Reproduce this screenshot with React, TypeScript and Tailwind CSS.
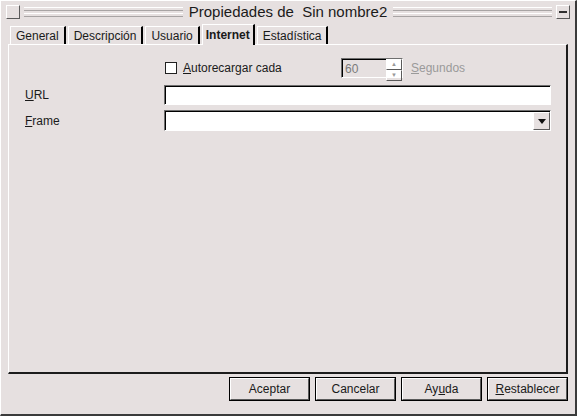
const bevelOut = "border border-t-white border-l-white border-r-[#5a5a5a] border-b-[#5a5a5a]";
const sunken = "border border-t-[#6f6f6f] border-l-[#6f6f6f] border-r-white border-b-white";

function Tab({ label, active, first }: { label: string; active?: boolean; first?: boolean }) {
  if (active) {
    return (
      <div className="relative z-10 -mb-px ml-[2px] flex h-[21px] items-center border-t border-l border-t-white border-l-white border-r-2 border-r-black bg-[#e6e0e0] px-[3px] text-[12px] font-bold">
        {label}
      </div>
    );
  }
  return (
    <div
      className={`mt-[2px] flex h-[18px] items-center border-t border-l border-t-white border-l-white border-r-2 border-r-black px-[5px] text-[12px] ${first ? "" : "ml-[2px]"}`}
    >
      {label}
    </div>
  );
}

function Button({ children }: { children: React.ReactNode }) {
  return (
    <div className="flex h-[24px] w-[81px] items-center justify-center border border-black">
      <div className={`flex h-full w-full items-center justify-center ${bevelOut} text-[12px]`}>{children}</div>
    </div>
  );
}

export default function App() {
  return (
    <div
      className="flex h-[416px] w-[577px] flex-col bg-[#e6e0e0] text-[#1a1a1a] border-r-2 border-b-2 border-r-[#3a3a3a] border-b-[#3a3a3a] border-t border-l border-t-white border-l-white"
      style={{ fontFamily: '"Liberation Sans", Arial, sans-serif' }}
    >
      {/* Title bar */}
      <div className="flex h-[20px] items-center gap-[4px] px-[5px] pt-[1px]">
        <div className={`h-[14px] w-[14px] ${bevelOut} bg-[#e6e0e0]`} />
        <div className="flex h-[10px] flex-1 flex-col justify-between">
          <div className="h-px bg-white" />
          <div className="h-px bg-[#a8a4a4]" />
          <div className="h-px bg-white" />
          <div className="h-px bg-[#a8a4a4]" />
        </div>
        <div className="px-[2px] text-[15px] leading-none">Propiedades de&nbsp; Sin nombre2</div>
        <div className="flex h-[10px] flex-1 flex-col justify-between">
          <div className="h-px bg-white" />
          <div className="h-px bg-[#a8a4a4]" />
          <div className="h-px bg-white" />
          <div className="h-px bg-[#a8a4a4]" />
        </div>
        <div className={`flex h-[14px] w-[14px] items-center justify-center ${bevelOut} bg-[#e6e0e0]`}>
          <div className="h-[2px] w-[8px] bg-[#303030]" />
        </div>
      </div>

      {/* Tabs */}
      <div className="flex items-end pl-[9px] pt-[3px]">
        <Tab label="General" first />
        <Tab label="Descripción" />
        <Tab label="Usuario" />
        <Tab label="Internet" active />
        <Tab label="Estadística" />
      </div>

      {/* Panel */}
      <div className="mx-[7px] flex h-[330px] flex-col border-t border-l border-t-white border-l-white border-r-2 border-b-2 border-r-[#1c1c1c] border-b-[#1c1c1c] text-[12px]">
        <div className="mt-[13px] flex items-center">
          <div className="ml-[156px] flex w-[176px] items-center gap-[6px]">
            <div className="h-[12px] w-[12px] border border-[#202020] bg-white" />
            <span>
              <u>A</u>utorecargar cada
            </span>
          </div>
          <div className={`flex h-[20px] w-[62px] items-center ${sunken} bg-white`}>
            <div className="flex h-full flex-1 items-center border-t border-l border-black bg-[#e6e0e0] pl-[2px] text-[#7a7a7a]">60</div>
            <div className="flex h-full w-[16px] flex-col">
              <div className={`flex flex-1 items-center justify-center ${bevelOut} text-[6px] text-[#999]`}>▲</div>
              <div className={`flex flex-1 items-center justify-center ${bevelOut} text-[6px] text-[#999]`}>▼</div>
            </div>
          </div>
          <span className="ml-[8px] text-[#9a9a9a]">
            <u>S</u>egundos
          </span>
        </div>

        <div className="mt-[7px] flex items-center">
          <span className="ml-[16px] w-[139px]">
            <u>U</u>RL
          </span>
          <div className={`h-[20px] w-[387px] ${sunken}`}>
            <div className="h-full w-full border-t border-l border-black bg-white" />
          </div>
        </div>

        <div className="mt-[5px] flex items-center">
          <span className="ml-[16px] w-[139px]">
            <u>F</u>rame
          </span>
          <div className={`flex h-[21px] w-[387px] ${sunken}`}>
            <div className="flex h-full w-full border-t border-l border-black bg-white">
              <div className="flex-1" />
              <div className={`flex h-full w-[17px] items-center justify-center ${bevelOut} bg-[#e6e0e0]`}>
                <svg width="8" height="5" viewBox="0 0 8 5">
                  <path d="M0 0 H8 L4 5 Z" fill="#111" />
                </svg>
              </div>
            </div>
          </div>
        </div>
      </div>

      {/* Buttons */}
      <div className="mt-[3px] flex justify-end gap-[5px] pr-[7px]">
        <Button>Aceptar</Button>
        <Button>Cancelar</Button>
        <Button>
          Ay<u>u</u>da
        </Button>
        <Button>
          <u>R</u>establecer
        </Button>
      </div>
    </div>
  );
}
